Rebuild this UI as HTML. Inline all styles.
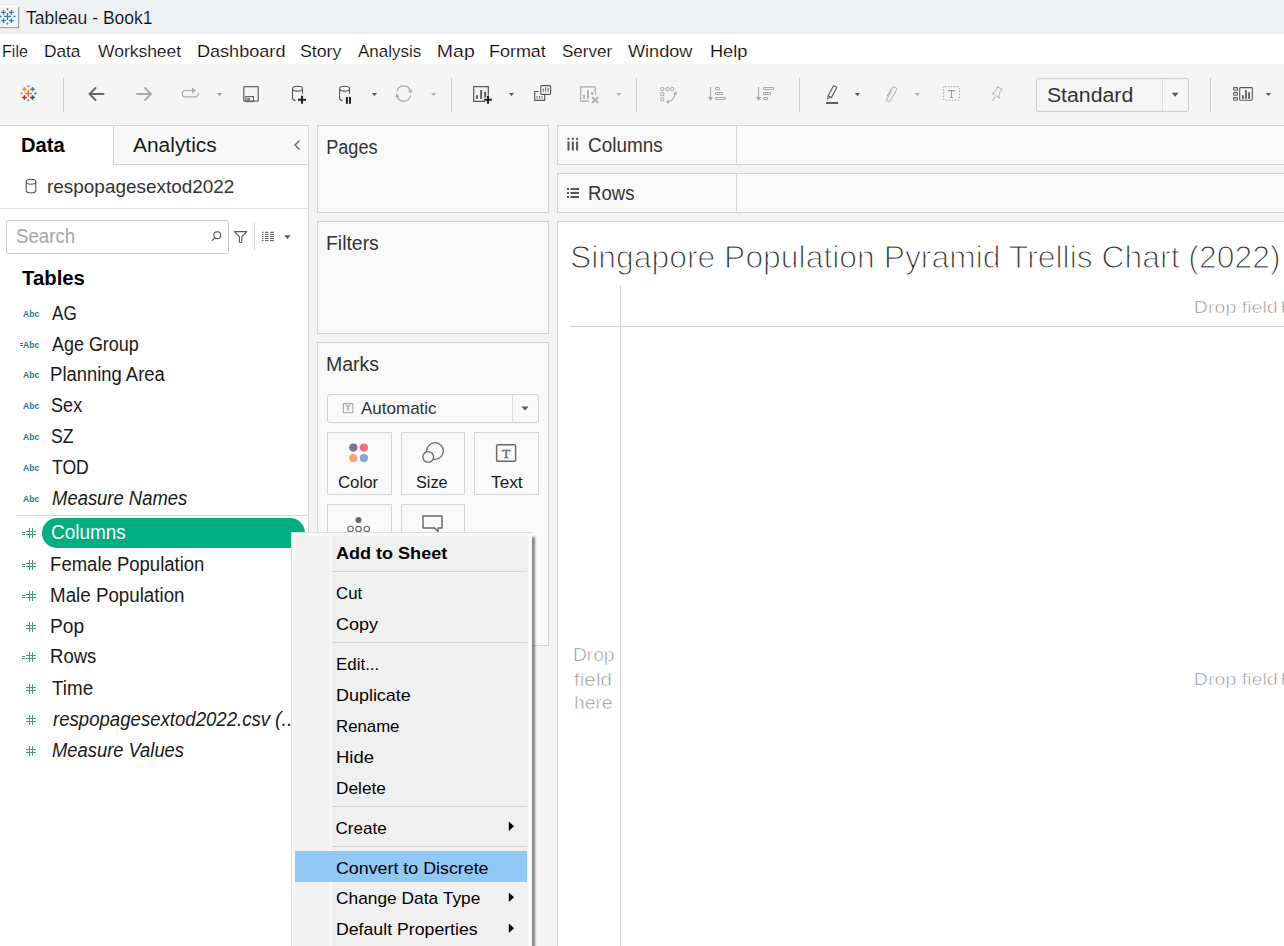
<!DOCTYPE html>
<html><head><meta charset="utf-8"><style>
html,body{margin:0;padding:0;width:1284px;height:946px;overflow:hidden;background:#f4f4f4;font-family:"Liberation Sans",sans-serif;position:relative}
span{font-family:"Liberation Sans",sans-serif}
svg{overflow:visible}
</style></head><body>
<div style="position:absolute;left:0px;top:0px;width:1284px;height:34px;background:#eff0f4"></div><div style="position:absolute;left:-2px;top:6px;width:20px;height:21px;box-sizing:border-box;background:#f2f2f2;border:1px solid #ffffff;box-shadow:1px 1px 1px #a0a0a0"></div><svg style="position:absolute;left:0;top:0" width="20" height="34" viewBox="0 0 20 34">
<g stroke="#2e7dbf" stroke-width="1.3" fill="none">
<path d="M7.5 13v6.9M4.1 16.4h6.9"/>
<path d="M3.5 10.1v4.6M1.2 12.4h4.6"/>
<path d="M11.4 10.1v4.6M9.1 12.4h4.6"/>
<path d="M3.5 18.4v4.6M1.2 20.7h4.6"/>
<path d="M11.4 18.4v4.6M9.1 20.7h4.6"/>
</g>
<g fill="#2e7dbf">
<path d="M7.5 7.9l1.2 1.2-1.2 1.2-1.2-1.2z"/>
<path d="M7.5 22.4l1.2 1.2-1.2 1.2-1.2-1.2z"/>
<path d="M14.5 15.2l1.2 1.2-1.2 1.2-1.2-1.2z"/>
<path d="M0.7 15.2l1.2 1.2-1.2 1.2-1.2-1.2z"/>
</g></svg><span style="position:absolute;left:26.20px;top:9.00px;font-size:18px;line-height:18px;font-weight:400;font-style:normal;color:#000;white-space:pre;transform:scaleX(0.9729);transform-origin:0.00px 0;-webkit-text-stroke:0.2px #eff0f4">Tableau - Book1</span><div style="position:absolute;left:0px;top:34px;width:1284px;height:30px;background:#ffffff"></div><span style="position:absolute;left:2.00px;top:43.00px;font-size:17px;line-height:17px;font-weight:400;font-style:normal;color:#000;white-space:pre;transform:scaleX(0.9423);transform-origin:1.00px 0;-webkit-text-stroke:0.2px #ffffff">File</span><span style="position:absolute;left:43.50px;top:43.00px;font-size:17px;line-height:17px;font-weight:400;font-style:normal;color:#000;white-space:pre;transform:scaleX(1.0143);transform-origin:1.00px 0;-webkit-text-stroke:0.2px #ffffff">Data</span><span style="position:absolute;left:97.50px;top:43.00px;font-size:17px;line-height:17px;font-weight:400;font-style:normal;color:#000;white-space:pre;transform:scaleX(1.0272);transform-origin:0.00px 0;-webkit-text-stroke:0.2px #ffffff">Worksheet</span><span style="position:absolute;left:196.80px;top:43.00px;font-size:17px;line-height:17px;font-weight:400;font-style:normal;color:#000;white-space:pre;transform:scaleX(1.0642);transform-origin:1.00px 0;-webkit-text-stroke:0.2px #ffffff">Dashboard</span><span style="position:absolute;left:300.00px;top:43.00px;font-size:17px;line-height:17px;font-weight:400;font-style:normal;color:#000;white-space:pre;transform:scaleX(1.0436);transform-origin:1.00px 0;-webkit-text-stroke:0.2px #ffffff">Story</span><span style="position:absolute;left:358.00px;top:43.00px;font-size:17px;line-height:17px;font-weight:400;font-style:normal;color:#000;white-space:pre;-webkit-text-stroke:0.2px #ffffff">Analysis</span><span style="position:absolute;left:437.00px;top:43.00px;font-size:17px;line-height:17px;font-weight:400;font-style:normal;color:#000;white-space:pre;transform:scaleX(1.1452);transform-origin:1.00px 0;-webkit-text-stroke:0.2px #ffffff">Map</span><span style="position:absolute;left:489.00px;top:43.00px;font-size:17px;line-height:17px;font-weight:400;font-style:normal;color:#000;white-space:pre;transform:scaleX(1.0566);transform-origin:1.00px 0;-webkit-text-stroke:0.2px #ffffff">Format</span><span style="position:absolute;left:562.00px;top:43.00px;font-size:17px;line-height:17px;font-weight:400;font-style:normal;color:#000;white-space:pre;-webkit-text-stroke:0.2px #ffffff">Server</span><span style="position:absolute;left:628.00px;top:43.00px;font-size:17px;line-height:17px;font-weight:400;font-style:normal;color:#000;white-space:pre;transform:scaleX(1.0656);transform-origin:0.00px 0;-webkit-text-stroke:0.2px #ffffff">Window</span><span style="position:absolute;left:709.60px;top:43.00px;font-size:17px;line-height:17px;font-weight:400;font-style:normal;color:#000;white-space:pre;transform:scaleX(1.0727);transform-origin:1.00px 0;-webkit-text-stroke:0.2px #ffffff">Help</span><div style="position:absolute;left:0px;top:64px;width:1284px;height:61px;background:#f5f5f5"></div><div style="position:absolute;left:63px;top:78px;width:1px;height:34px;background:#cfcfcf"></div><div style="position:absolute;left:451px;top:78px;width:1px;height:34px;background:#cfcfcf"></div><div style="position:absolute;left:636px;top:78px;width:1px;height:34px;background:#cfcfcf"></div><div style="position:absolute;left:799px;top:78px;width:1px;height:34px;background:#cfcfcf"></div><div style="position:absolute;left:1210px;top:78px;width:1px;height:34px;background:#cfcfcf"></div><div style="position:absolute;left:308px;top:125px;width:9px;height:821px;background:#f4f4f4"></div><div style="position:absolute;left:0px;top:125px;width:309px;height:821px;background:#ffffff;border-top:1px solid #d6d6d6;border-right:1px solid #d6d6d6;box-sizing:border-box"></div><div style="position:absolute;left:113px;top:125px;width:195px;height:40px;background:#f8f8f8;border-top:1px solid #d6d6d6;border-left:1px solid #d4d4d4;border-bottom:1px solid #d4d4d4;box-sizing:border-box"></div><span style="position:absolute;left:21.00px;top:135.00px;font-size:20px;line-height:20px;font-weight:700;font-style:normal;color:#000;white-space:pre;transform:scaleX(1.0070);transform-origin:1.00px 0;">Data</span><span style="position:absolute;left:132.80px;top:135.00px;font-size:20px;line-height:20px;font-weight:400;font-style:normal;color:#1a1a1a;white-space:pre;transform:scaleX(1.0468);transform-origin:0.00px 0;">Analytics</span><svg style="position:absolute;left:291.8px;top:137.8px" width="10" height="14"><path d="M7.5 2.5L3 7l4.5 4.5" stroke="#5a5a5a" stroke-width="1.2" fill="none"/></svg><svg style="position:absolute;left:25px;top:178px" width="12" height="16"><ellipse cx="6" cy="3.8" rx="4.8" ry="2.5" stroke="#555" stroke-width="1.1" fill="none"/><path d="M1.2 3.8v8.7c0 1.3 2.2 2.3 4.8 2.3s4.8-1 4.8-2.3V3.8" stroke="#555" stroke-width="1.1" fill="none"/></svg><span style="position:absolute;left:47.00px;top:177.00px;font-size:19px;line-height:19px;font-weight:400;font-style:normal;color:#333333;white-space:pre;transform:scaleX(0.9962);transform-origin:1.00px 0;">respopagesextod2022</span><div style="position:absolute;left:0px;top:208px;width:308px;height:1px;background:#e2e2e2"></div><div style="position:absolute;left:6px;top:220px;width:223px;height:34px;box-sizing:border-box;border:1px solid #cacaca;border-radius:3px;background:#fff"></div><span style="position:absolute;left:15.70px;top:227.00px;font-size:19.5px;line-height:19.5px;font-weight:400;font-style:normal;color:#a6a6a6;white-space:pre;transform:scaleX(0.9550);transform-origin:1.00px 0;">Search</span><svg style="position:absolute;left:0;top:0" width="300" height="260" viewBox="0 0 300 260">
<circle cx="217.3" cy="235.2" r="3.4" stroke="#555" stroke-width="1.1" fill="none"/>
<path d="M214.9 237.7l-2.6 2.7" stroke="#555" stroke-width="1.2" stroke-linecap="round"/>
<path d="M234.6 231.6h12l-4.8 5.3v5.2c0 0.5 -2.4 0.5 -2.4 0v-5.2z" stroke="#555" stroke-width="1.1" fill="none" stroke-linejoin="round"/>
<g fill="#555">
<rect x="261.9" y="231.8" width="1.6" height="1"/><rect x="265" y="231.8" width="3.5" height="1"/><rect x="270" y="231.8" width="4" height="1"/>
<rect x="261.9" y="233.9" width="1.6" height="1"/><rect x="265" y="233.9" width="3.5" height="1"/><rect x="270" y="233.9" width="4" height="1"/>
<rect x="261.9" y="236" width="1.6" height="1"/><rect x="265" y="236" width="3.5" height="1"/><rect x="270" y="236" width="4" height="1"/>
<rect x="261.9" y="238" width="1.6" height="1"/><rect x="265" y="238" width="3.5" height="1"/><rect x="270" y="238" width="4" height="1"/>
<rect x="261.9" y="240.1" width="1.6" height="1"/><rect x="265" y="240.1" width="3.5" height="1"/><rect x="270" y="240.1" width="4" height="1"/>
</g>
<path d="M284.2 235.3h6.4l-3.2 3.8z" fill="#555"/>
</svg><div style="position:absolute;left:254px;top:223px;width:1px;height:27px;background:#d6d6d6"></div><span style="position:absolute;left:22.00px;top:268.00px;font-size:20px;line-height:20px;font-weight:700;font-style:normal;color:#000;white-space:pre;transform:scaleX(1.0164);transform-origin:0.00px 0;">Tables</span><span style="position:absolute;left:51.60px;top:304.00px;font-size:19.5px;line-height:19.5px;font-weight:400;font-style:normal;color:#1a1a1a;white-space:pre;transform:scaleX(0.8778);transform-origin:0.00px 0;">AG</span><span style="position:absolute;left:23.00px;top:309.00px;font-size:9.5px;line-height:9.5px;font-weight:700;font-style:normal;color:#2a7396;white-space:pre;transform:scaleX(0.9000);transform-origin:0.00px 0;">Abc</span><span style="position:absolute;left:51.60px;top:335.00px;font-size:19.5px;line-height:19.5px;font-weight:400;font-style:normal;color:#1a1a1a;white-space:pre;transform:scaleX(0.9202);transform-origin:0.00px 0;">Age Group</span><span style="position:absolute;left:23.00px;top:340.00px;font-size:9.5px;line-height:9.5px;font-weight:700;font-style:normal;color:#2a7396;white-space:pre;transform:scaleX(0.9000);transform-origin:0.00px 0;">Abc</span><div style="position:absolute;left:20px;top:343px;width:3px;height:1px;background:#2a7396"></div><div style="position:absolute;left:20px;top:345px;width:3px;height:1px;background:#2a7396"></div><span style="position:absolute;left:49.60px;top:365.00px;font-size:19.5px;line-height:19.5px;font-weight:400;font-style:normal;color:#1a1a1a;white-space:pre;transform:scaleX(0.9442);transform-origin:2.00px 0;">Planning Area</span><span style="position:absolute;left:23.00px;top:370.00px;font-size:9.5px;line-height:9.5px;font-weight:700;font-style:normal;color:#2a7396;white-space:pre;transform:scaleX(0.9000);transform-origin:0.00px 0;">Abc</span><span style="position:absolute;left:50.60px;top:396.00px;font-size:19.5px;line-height:19.5px;font-weight:400;font-style:normal;color:#1a1a1a;white-space:pre;transform:scaleX(0.9250);transform-origin:1.00px 0;">Sex</span><span style="position:absolute;left:23.00px;top:401.00px;font-size:9.5px;line-height:9.5px;font-weight:700;font-style:normal;color:#2a7396;white-space:pre;transform:scaleX(0.9000);transform-origin:0.00px 0;">Abc</span><span style="position:absolute;left:50.60px;top:427.00px;font-size:19.5px;line-height:19.5px;font-weight:400;font-style:normal;color:#1a1a1a;white-space:pre;transform:scaleX(0.9042);transform-origin:1.00px 0;">SZ</span><span style="position:absolute;left:23.00px;top:432.00px;font-size:9.5px;line-height:9.5px;font-weight:700;font-style:normal;color:#2a7396;white-space:pre;transform:scaleX(0.9000);transform-origin:0.00px 0;">Abc</span><span style="position:absolute;left:51.60px;top:458.00px;font-size:19.5px;line-height:19.5px;font-weight:400;font-style:normal;color:#1a1a1a;white-space:pre;transform:scaleX(0.9025);transform-origin:0.00px 0;">TOD</span><span style="position:absolute;left:23.00px;top:463.00px;font-size:9.5px;line-height:9.5px;font-weight:700;font-style:normal;color:#2a7396;white-space:pre;transform:scaleX(0.9000);transform-origin:0.00px 0;">Abc</span><span style="position:absolute;left:51.80px;top:489.00px;font-size:19.5px;line-height:19.5px;font-weight:400;font-style:italic;color:#1a1a1a;white-space:pre;transform:scaleX(0.9447);transform-origin:1.00px 0;">Measure Names</span><span style="position:absolute;left:23.00px;top:494.00px;font-size:9.5px;line-height:9.5px;font-weight:700;font-style:normal;color:#2a7396;white-space:pre;transform:scaleX(0.9000);transform-origin:0.00px 0;">Abc</span><div style="position:absolute;left:16px;top:515px;width:292px;height:1px;background:#d9d9d9"></div><div style="position:absolute;left:42px;top:518px;width:263px;height:30px;border-radius:15px;background:#00ae82"></div><span style="position:absolute;left:50.70px;top:523.00px;font-size:19.5px;line-height:19.5px;font-weight:400;font-style:normal;color:#ffffff;white-space:pre;transform:scaleX(0.9707);transform-origin:1.00px 0;">Columns</span><div style="position:absolute;left:22px;top:532px;width:3px;height:1px;background:#40a07a"></div><div style="position:absolute;left:22px;top:534px;width:3px;height:1px;background:#40a07a"></div><div style="position:absolute;left:29px;top:528px;width:1px;height:10px;background:#40a07a"></div><div style="position:absolute;left:32px;top:528px;width:1px;height:10px;background:#40a07a"></div><div style="position:absolute;left:26px;top:531px;width:10px;height:1px;background:#40a07a"></div><div style="position:absolute;left:26px;top:534px;width:10px;height:1px;background:#40a07a"></div><span style="position:absolute;left:49.70px;top:555.00px;font-size:19.5px;line-height:19.5px;font-weight:400;font-style:normal;color:#1a1a1a;white-space:pre;transform:scaleX(0.9488);transform-origin:2.00px 0;">Female Population</span><div style="position:absolute;left:22px;top:564px;width:3px;height:1px;background:#40a07a"></div><div style="position:absolute;left:22px;top:566px;width:3px;height:1px;background:#40a07a"></div><div style="position:absolute;left:29px;top:560px;width:1px;height:10px;background:#40a07a"></div><div style="position:absolute;left:32px;top:560px;width:1px;height:10px;background:#40a07a"></div><div style="position:absolute;left:26px;top:563px;width:10px;height:1px;background:#40a07a"></div><div style="position:absolute;left:26px;top:566px;width:10px;height:1px;background:#40a07a"></div><span style="position:absolute;left:49.70px;top:586.00px;font-size:19.5px;line-height:19.5px;font-weight:400;font-style:normal;color:#1a1a1a;white-space:pre;transform:scaleX(0.9613);transform-origin:2.00px 0;">Male Population</span><div style="position:absolute;left:22px;top:595px;width:3px;height:1px;background:#40a07a"></div><div style="position:absolute;left:22px;top:597px;width:3px;height:1px;background:#40a07a"></div><div style="position:absolute;left:29px;top:591px;width:1px;height:10px;background:#40a07a"></div><div style="position:absolute;left:32px;top:591px;width:1px;height:10px;background:#40a07a"></div><div style="position:absolute;left:26px;top:594px;width:10px;height:1px;background:#40a07a"></div><div style="position:absolute;left:26px;top:597px;width:10px;height:1px;background:#40a07a"></div><span style="position:absolute;left:49.70px;top:617.00px;font-size:19.5px;line-height:19.5px;font-weight:400;font-style:normal;color:#1a1a1a;white-space:pre;transform:scaleX(0.9812);transform-origin:2.00px 0;">Pop</span><div style="position:absolute;left:29px;top:622px;width:1px;height:10px;background:#40a07a"></div><div style="position:absolute;left:32px;top:622px;width:1px;height:10px;background:#40a07a"></div><div style="position:absolute;left:26px;top:625px;width:10px;height:1px;background:#40a07a"></div><div style="position:absolute;left:26px;top:628px;width:10px;height:1px;background:#40a07a"></div><span style="position:absolute;left:49.70px;top:647.00px;font-size:19.5px;line-height:19.5px;font-weight:400;font-style:normal;color:#1a1a1a;white-space:pre;transform:scaleX(0.9478);transform-origin:2.00px 0;">Rows</span><div style="position:absolute;left:22px;top:656px;width:3px;height:1px;background:#40a07a"></div><div style="position:absolute;left:22px;top:658px;width:3px;height:1px;background:#40a07a"></div><div style="position:absolute;left:29px;top:652px;width:1px;height:10px;background:#40a07a"></div><div style="position:absolute;left:32px;top:652px;width:1px;height:10px;background:#40a07a"></div><div style="position:absolute;left:26px;top:655px;width:10px;height:1px;background:#40a07a"></div><div style="position:absolute;left:26px;top:658px;width:10px;height:1px;background:#40a07a"></div><span style="position:absolute;left:51.70px;top:679.00px;font-size:19.5px;line-height:19.5px;font-weight:400;font-style:normal;color:#1a1a1a;white-space:pre;transform:scaleX(0.9643);transform-origin:0.00px 0;">Time</span><div style="position:absolute;left:29px;top:684px;width:1px;height:10px;background:#40a07a"></div><div style="position:absolute;left:32px;top:684px;width:1px;height:10px;background:#40a07a"></div><div style="position:absolute;left:26px;top:687px;width:10px;height:1px;background:#40a07a"></div><div style="position:absolute;left:26px;top:690px;width:10px;height:1px;background:#40a07a"></div><span style="position:absolute;left:52.60px;top:710.00px;font-size:19.5px;line-height:19.5px;font-weight:400;font-style:italic;color:#1a1a1a;white-space:pre;transform:scaleX(0.9537);transform-origin:0.00px 0;">respopagesextod2022.csv</span><span style="position:absolute;left:275.00px;top:710.00px;font-size:19.5px;line-height:19.5px;font-weight:400;font-style:italic;color:#1a1a1a;white-space:pre;">(...</span><div style="position:absolute;left:29px;top:715px;width:1px;height:10px;background:#40a07a"></div><div style="position:absolute;left:32px;top:715px;width:1px;height:10px;background:#40a07a"></div><div style="position:absolute;left:26px;top:718px;width:10px;height:1px;background:#40a07a"></div><div style="position:absolute;left:26px;top:721px;width:10px;height:1px;background:#40a07a"></div><span style="position:absolute;left:51.60px;top:741.00px;font-size:19.5px;line-height:19.5px;font-weight:400;font-style:italic;color:#1a1a1a;white-space:pre;transform:scaleX(0.9410);transform-origin:1.00px 0;">Measure Values</span><div style="position:absolute;left:29px;top:746px;width:1px;height:10px;background:#40a07a"></div><div style="position:absolute;left:32px;top:746px;width:1px;height:10px;background:#40a07a"></div><div style="position:absolute;left:26px;top:749px;width:10px;height:1px;background:#40a07a"></div><div style="position:absolute;left:26px;top:752px;width:10px;height:1px;background:#40a07a"></div><div style="position:absolute;left:317px;top:125px;width:232px;height:88px;background:#f9f9f9;border:1px solid #d5d5d5;box-sizing:border-box"></div><span style="position:absolute;left:325.80px;top:138.00px;font-size:19.5px;line-height:19.5px;font-weight:400;font-style:normal;color:#333333;white-space:pre;transform:scaleX(0.9302);transform-origin:2.00px 0;">Pages</span><div style="position:absolute;left:317px;top:221px;width:232px;height:113px;background:#f9f9f9;border:1px solid #d5d5d5;box-sizing:border-box"></div><span style="position:absolute;left:325.80px;top:234.00px;font-size:19.5px;line-height:19.5px;font-weight:400;font-style:normal;color:#333333;white-space:pre;transform:scaleX(0.9940);transform-origin:2.00px 0;">Filters</span><div style="position:absolute;left:317px;top:342px;width:232px;height:304px;background:#f9f9f9;border:1px solid #d5d5d5;box-sizing:border-box"></div><span style="position:absolute;left:326.00px;top:355.00px;font-size:19.5px;line-height:19.5px;font-weight:400;font-style:normal;color:#333333;white-space:pre;">Marks</span><div style="position:absolute;left:327px;top:394px;width:212px;height:29px;box-sizing:border-box;border:1px solid #cfcfcf;border-radius:3px;background:#f9f9f9"></div><div style="position:absolute;left:512px;top:395px;width:1px;height:27px;background:#dcdcdc"></div><svg style="position:absolute;left:521px;top:406px" width="9" height="6"><path d="M0.5 0.5h7l-3.5 4z" fill="#555"/></svg><svg style="position:absolute;left:341px;top:402px" width="14" height="13"><rect x="2.4" y="1.6" width="9.4" height="9.2" rx="0.6" stroke="#a6a6a6" stroke-width="1.1" fill="none"/><path d="M4.4 3.9h5.2" stroke="#a6a6a6" stroke-width="1.1"/><path d="M7 3.9v4.8" stroke="#a6a6a6" stroke-width="1.5"/></svg><span style="position:absolute;left:361.00px;top:400.00px;font-size:17px;line-height:17px;font-weight:400;font-style:normal;color:#333333;white-space:pre;">Automatic</span><div style="position:absolute;left:327px;top:432px;width:65px;height:63px;background:#f9f9f9;border:1px solid #d6d6d6;box-sizing:border-box"></div><div style="position:absolute;left:401px;top:432px;width:64px;height:63px;background:#f9f9f9;border:1px solid #d6d6d6;box-sizing:border-box"></div><div style="position:absolute;left:474px;top:432px;width:65px;height:63px;background:#f9f9f9;border:1px solid #d6d6d6;box-sizing:border-box"></div><div style="position:absolute;left:327px;top:504px;width:65px;height:63px;background:#f9f9f9;border:1px solid #d6d6d6;box-sizing:border-box"></div><div style="position:absolute;left:401px;top:504px;width:64px;height:63px;background:#f9f9f9;border:1px solid #d6d6d6;box-sizing:border-box"></div><svg style="position:absolute;left:345px;top:439px" width="28" height="28"><circle cx="8.3" cy="8.6" r="4.1" fill="#836f9a"/><circle cx="18.9" cy="8.6" r="4.1" fill="#f06f80"/><circle cx="8.3" cy="19.1" r="4.1" fill="#eea57c"/><circle cx="18.9" cy="19.1" r="4.1" fill="#82a6cc"/></svg><span style="position:absolute;left:338.30px;top:475.00px;font-size:16px;line-height:16px;font-weight:400;font-style:normal;color:#1a1a1a;white-space:pre;transform:scaleX(1.0514);transform-origin:1.00px 0;">Color</span><svg style="position:absolute;left:418px;top:438px" width="30" height="28"><circle cx="17" cy="13" r="8.3" stroke="#666" stroke-width="1.3" fill="none"/><circle cx="10.2" cy="19" r="5.4" stroke="#666" stroke-width="1.3" fill="#f9f9f9"/></svg><span style="position:absolute;left:416.00px;top:475.00px;font-size:16px;line-height:16px;font-weight:400;font-style:normal;color:#1a1a1a;white-space:pre;transform:scaleX(1.0167);transform-origin:1.00px 0;">Size</span><svg style="position:absolute;left:494px;top:442px" width="24" height="22"><rect x="2.6" y="2.7" width="19" height="16.6" rx="1.2" stroke="#666" stroke-width="1.4" fill="none"/><text x="12" y="15.7" text-anchor="middle" font-family="Liberation Serif" font-size="13.5" font-weight="400" fill="#666" stroke="#666" stroke-width="0.3">T</text></svg><span style="position:absolute;left:490.70px;top:475.00px;font-size:16px;line-height:16px;font-weight:400;font-style:normal;color:#1a1a1a;white-space:pre;transform:scaleX(1.0793);transform-origin:0.00px 0;">Text</span><svg style="position:absolute;left:344px;top:513px" width="30" height="22"><circle cx="14.5" cy="7" r="3" fill="#666"/><circle cx="6.5" cy="16" r="2.7" stroke="#666" stroke-width="1.1" fill="none"/><circle cx="14.5" cy="16" r="2.7" stroke="#666" stroke-width="1.1" fill="none"/><circle cx="22.8" cy="16" r="2.7" stroke="#666" stroke-width="1.1" fill="none"/></svg><svg style="position:absolute;left:420px;top:513px" width="26" height="22"><path d="M3 3h19v12h-4v3.5l-3.5-3.5H3z" stroke="#666" stroke-width="1.4" fill="none" stroke-linejoin="round"/></svg><div style="position:absolute;left:549px;top:125px;width:8px;height:821px;background:#f4f4f4"></div><div style="position:absolute;left:557px;top:125px;width:740px;height:40px;background:#f9f9f9;border:1px solid #d5d5d5;box-sizing:border-box"></div><div style="position:absolute;left:736px;top:126px;width:1px;height:38px;background:#d8d8d8"></div><div style="position:absolute;left:557px;top:173px;width:740px;height:40px;background:#f9f9f9;border:1px solid #d5d5d5;box-sizing:border-box"></div><div style="position:absolute;left:736px;top:174px;width:1px;height:38px;background:#d8d8d8"></div><svg style="position:absolute;left:566px;top:137px" width="14" height="15"><g fill="#555"><rect x="1.5" y="0.8" width="2" height="2"/><rect x="5.8" y="0.8" width="2" height="2"/><rect x="10.1" y="0.8" width="2" height="2"/><rect x="1.5" y="4.5" width="2" height="9"/><rect x="5.8" y="4.5" width="2" height="9"/><rect x="10.1" y="4.5" width="2" height="9"/></g></svg><span style="position:absolute;left:588.30px;top:136.00px;font-size:19.5px;line-height:19.5px;font-weight:400;font-style:normal;color:#333333;white-space:pre;transform:scaleX(0.9693);transform-origin:1.00px 0;">Columns</span><svg style="position:absolute;left:566px;top:186.5px" width="14" height="13"><g fill="#555"><rect x="1" y="1" width="2" height="2"/><rect x="1" y="5" width="2" height="2"/><rect x="1" y="9" width="2" height="2"/><rect x="4.5" y="1" width="8.5" height="2"/><rect x="4.5" y="5" width="8.5" height="2"/><rect x="4.5" y="9" width="8.5" height="2"/></g></svg><span style="position:absolute;left:587.70px;top:184.00px;font-size:19.5px;line-height:19.5px;font-weight:400;font-style:normal;color:#333333;white-space:pre;transform:scaleX(0.9500);transform-origin:2.00px 0;">Rows</span><div style="position:absolute;left:557px;top:221px;width:740px;height:730px;background:#ffffff;border:1px solid #d5d5d5;box-sizing:border-box"></div><span style="position:absolute;left:569.70px;top:242.00px;font-size:30.5px;line-height:30.5px;font-weight:400;font-style:normal;color:#333333;white-space:pre;transform:scaleX(1.0453);transform-origin:2.00px 0;-webkit-text-stroke:1.1px #ffffff;paint-order:fill">Singapore Population Pyramid Trellis Chart (2022)</span><div style="position:absolute;left:620px;top:286px;width:1px;height:660px;background:#d0d0d0"></div><div style="position:absolute;left:570px;top:326px;width:714px;height:1px;background:#d0d0d0"></div><span style="position:absolute;left:1193.70px;top:299.00px;font-size:17px;line-height:17px;font-weight:400;font-style:normal;color:#8a8a8a;white-space:pre;transform:scaleX(1.1521);transform-origin:1.00px 0;-webkit-text-stroke:0.6px #ffffff">Drop field</span><span style="position:absolute;left:1280.80px;top:299.00px;font-size:17px;line-height:17px;font-weight:400;font-style:normal;color:#8a8a8a;white-space:pre;transform:scaleX(1.1938);transform-origin:1.00px 0;-webkit-text-stroke:0.6px #ffffff">here</span><span style="position:absolute;left:1193.70px;top:671.00px;font-size:17px;line-height:17px;font-weight:400;font-style:normal;color:#8a8a8a;white-space:pre;transform:scaleX(1.1521);transform-origin:1.00px 0;-webkit-text-stroke:0.6px #ffffff">Drop field</span><span style="position:absolute;left:1280.80px;top:671.00px;font-size:17px;line-height:17px;font-weight:400;font-style:normal;color:#8a8a8a;white-space:pre;transform:scaleX(1.1938);transform-origin:1.00px 0;-webkit-text-stroke:0.6px #ffffff">here</span><span style="position:absolute;left:572.50px;top:647.00px;font-size:17.5px;line-height:17.5px;font-weight:400;font-style:normal;color:#8a8a8a;white-space:pre;transform:scaleX(1.0972);transform-origin:1.00px 0;-webkit-text-stroke:0.6px #ffffff">Drop</span><span style="position:absolute;left:574.30px;top:672.00px;font-size:17.5px;line-height:17.5px;font-weight:400;font-style:normal;color:#8a8a8a;white-space:pre;transform:scaleX(1.1839);transform-origin:0.00px 0;-webkit-text-stroke:0.6px #ffffff">field</span><span style="position:absolute;left:573.80px;top:695.00px;font-size:17.5px;line-height:17.5px;font-weight:400;font-style:normal;color:#8a8a8a;white-space:pre;transform:scaleX(1.1061);transform-origin:1.00px 0;-webkit-text-stroke:0.6px #ffffff">here</span><div style="position:absolute;left:291px;top:532px;width:241px;height:420px;background:#f9f9f9;border-top:1px solid #dddddd;border-left:1px solid #dddddd;box-sizing:border-box;box-shadow:3px 5px 2px rgba(0,0,0,0.45)"></div><div style="position:absolute;left:295px;top:536px;width:233px;height:410px;background:#f0f0f0"></div><div style="position:absolute;left:329px;top:536px;width:3px;height:410px;background:#f7f7f7"></div><div style="position:absolute;left:332px;top:571px;width:195px;height:1px;background:#d5d5d5"></div><div style="position:absolute;left:332px;top:642px;width:195px;height:1px;background:#d5d5d5"></div><div style="position:absolute;left:332px;top:806px;width:195px;height:1px;background:#d5d5d5"></div><div style="position:absolute;left:332px;top:846px;width:195px;height:1px;background:#d5d5d5"></div><div style="position:absolute;left:295px;top:851px;width:232px;height:31px;background:#91c8f6"></div><span style="position:absolute;left:335.60px;top:545.00px;font-size:17px;line-height:17px;font-weight:700;font-style:normal;color:#000;white-space:pre;transform:scaleX(1.0615);transform-origin:1.00px 0;">Add to Sheet</span><span style="position:absolute;left:335.60px;top:585.00px;font-size:17px;line-height:17px;font-weight:400;font-style:normal;color:#000;white-space:pre;transform:scaleX(0.9885);transform-origin:1.00px 0;">Cut</span><span style="position:absolute;left:335.60px;top:616.00px;font-size:17px;line-height:17px;font-weight:400;font-style:normal;color:#000;white-space:pre;transform:scaleX(1.0590);transform-origin:1.00px 0;">Copy</span><span style="position:absolute;left:335.60px;top:656.00px;font-size:17px;line-height:17px;font-weight:400;font-style:normal;color:#000;white-space:pre;transform:scaleX(0.9951);transform-origin:1.00px 0;">Edit...</span><span style="position:absolute;left:335.60px;top:687.00px;font-size:17px;line-height:17px;font-weight:400;font-style:normal;color:#000;white-space:pre;transform:scaleX(1.0565);transform-origin:1.00px 0;">Duplicate</span><span style="position:absolute;left:335.60px;top:718.00px;font-size:17px;line-height:17px;font-weight:400;font-style:normal;color:#000;white-space:pre;transform:scaleX(0.9873);transform-origin:1.00px 0;">Rename</span><span style="position:absolute;left:335.60px;top:749.00px;font-size:17px;line-height:17px;font-weight:400;font-style:normal;color:#000;white-space:pre;transform:scaleX(1.0879);transform-origin:1.00px 0;">Hide</span><span style="position:absolute;left:335.60px;top:780.00px;font-size:17px;line-height:17px;font-weight:400;font-style:normal;color:#000;white-space:pre;transform:scaleX(1.0167);transform-origin:1.00px 0;">Delete</span><span style="position:absolute;left:335.60px;top:820.00px;font-size:17px;line-height:17px;font-weight:400;font-style:normal;color:#000;white-space:pre;">Create</span><span style="position:absolute;left:335.60px;top:860.00px;font-size:17px;line-height:17px;font-weight:400;font-style:normal;color:#000;white-space:pre;transform:scaleX(1.0486);transform-origin:1.00px 0;">Convert to Discrete</span><span style="position:absolute;left:335.60px;top:890.00px;font-size:17px;line-height:17px;font-weight:400;font-style:normal;color:#000;white-space:pre;transform:scaleX(1.0207);transform-origin:1.00px 0;">Change Data Type</span><span style="position:absolute;left:335.60px;top:921.00px;font-size:17px;line-height:17px;font-weight:400;font-style:normal;color:#000;white-space:pre;transform:scaleX(1.0415);transform-origin:1.00px 0;">Default Properties</span><svg style="position:absolute;left:508px;top:820.6px" width="7" height="11"><path d="M0.8 0.5L6 5.2 0.8 10z" fill="#000"/></svg><svg style="position:absolute;left:508px;top:892px" width="7" height="11"><path d="M0.8 0.5L6 5.2 0.8 10z" fill="#000"/></svg><svg style="position:absolute;left:508px;top:922.6px" width="7" height="11"><path d="M0.8 0.5L6 5.2 0.8 10z" fill="#000"/></svg><svg style="position:absolute;left:0;top:64px" width="1284" height="61" viewBox="0 64 1284 61">
<!-- tableau logo -->
<g stroke-width="1.5" fill="none">
<path d="M28.4 90v7M24.9 93.5h7" stroke="#e8762c"/>
<path d="M24.4 87v4.6M22.1 89.3h4.6" stroke="#f28e2b"/>
<path d="M32.5 87v4.6M30.2 89.3h4.6" stroke="#4e7e94"/>
<path d="M24.4 95.2v4.6M22.1 97.5h4.6" stroke="#c72035"/>
<path d="M32.5 95.2v4.6M30.2 97.5h4.6" stroke="#1f447e"/>
</g>
<g>
<path d="M28.4 84.8l1.4 1.4-1.4 1.4-1.4-1.4z" fill="#6c9fb1"/>
<path d="M21.5 92l1.4 1.4-1.4 1.4-1.4-1.4z" fill="#7aa7b8"/>
<path d="M35.4 92l1.4 1.4-1.4 1.4-1.4-1.4z" fill="#59639c"/>
<path d="M28.4 99l1.4 1.4-1.4 1.4-1.4-1.4z" fill="#8e9ac0"/>
</g>
<!-- back arrow -->
<path d="M103.5 94H89.5M95.5 88l-6 6 6 6" stroke="#666" stroke-width="1.9" fill="none" stroke-linecap="round" stroke-linejoin="round"/>
<!-- forward arrow -->
<path d="M137 94h14M145 88l6 6-6 6" stroke="#aaa" stroke-width="1.9" fill="none" stroke-linecap="round" stroke-linejoin="round"/>
<!-- loop -->
<path d="M192 90.5h-6.5a3.2 3.2 0 0 0 0 6.4h9.5a3.2 3.2 0 0 0 3-4.5" stroke="#aaa" stroke-width="1.2" fill="none"/>
<path d="M192 87.5l4 3-4 3z" fill="#aaa"/>
<path d="M217 93h5l-2.5 3z" fill="#999"/>
<!-- save -->
<rect x="243.8" y="86.6" width="14.4" height="14.6" rx="0.8" stroke="#666" stroke-width="1.3" fill="none"/>
<rect x="245.8" y="96.6" width="7.6" height="5" stroke="#666" stroke-width="1.2" fill="none"/>
<rect x="247.2" y="98" width="2.8" height="3.2" fill="#777"/>
<!-- datasource + -->
<ellipse cx="297.5" cy="88.7" rx="5" ry="2.4" stroke="#555" stroke-width="1.1" fill="none"/>
<path d="M292.5 88.7v9.6c0 1.2 1.3 2 3 2.3M302.5 88.7v5" stroke="#555" stroke-width="1.1" fill="none"/>
<path d="M302 95.8v8M298 99.8h8" stroke="#222" stroke-width="2.1"/>
<!-- datasource pause -->
<ellipse cx="344.6" cy="88.7" rx="5" ry="2.4" stroke="#555" stroke-width="1.1" fill="none"/>
<path d="M339.6 88.7v9.6c0 1.2 1.3 2 3 2.3M349.6 88.7v5" stroke="#555" stroke-width="1.1" fill="none"/>
<rect x="345.9" y="97" width="2" height="6.8" fill="#222"/><rect x="349" y="97" width="2" height="6.8" fill="#222"/>
<path d="M371.8 93h5.3l-2.65 3z" fill="#555"/>
<!-- refresh -->
<path d="M397 91.5a6.8 6.8 0 0 1 13.3 -0.5" stroke="#aaa" stroke-width="1.2" fill="none"/>
<path d="M410.5 95.5a6.8 6.8 0 0 1 -13.3 0.5" stroke="#aaa" stroke-width="1.2" fill="none"/>
<path d="M412.3 89.2l-1 4.2-3.2-2.6z" fill="#aaa"/>
<path d="M395.2 97.8l1-4.2 3.2 2.6z" fill="#aaa"/>
<path d="M431 93h5.3l-2.65 3z" fill="#aaa"/>
<!-- new worksheet -->
<path d="M485 101.3h-11.3v-14.6h14.6v9" stroke="#555" stroke-width="1.2" fill="none"/>
<rect x="476.1" y="95.2" width="1.9" height="3.7" fill="#555"/><rect x="480.2" y="90" width="1.9" height="8.9" fill="#555"/><rect x="484.2" y="91.8" width="1.9" height="5.5" fill="#555"/>
<path d="M488 95.9v7.8M484.1 99.8h7.8" stroke="#222" stroke-width="2.1"/>
<path d="M509 93h5l-2.5 3z" fill="#555"/>
<!-- duplicate sheet -->
<rect x="540.8" y="85.6" width="9.8" height="8.8" rx="0.8" stroke="#555" stroke-width="1.1" fill="none"/>
<path d="M544.6 85.8v0" />
<rect x="542.8" y="88.5" width="0.9" height="3.2" fill="#555"/><rect x="545.2" y="87.3" width="0.9" height="4.4" fill="#555"/><rect x="547.6" y="88.1" width="0.9" height="3.6" fill="#555"/>
<path d="M538.5 91.5h-3.8v8.9h10v-5.8" stroke="#555" stroke-width="1.1" fill="none"/>
<rect x="536.6" y="96" width="0.9" height="2.6" fill="#555"/><rect x="539" y="96" width="0.9" height="2.6" fill="#555"/><rect x="541.4" y="96" width="0.9" height="2.6" fill="#555"/>
<!-- clear sheet -->
<path d="M589 101.2h-8.3v-14.4h14.5v8" stroke="#aaa" stroke-width="1.2" fill="none"/>
<rect x="583.2" y="95" width="1.8" height="3.8" fill="#aaa"/><rect x="587" y="90.1" width="1.8" height="8.7" fill="#aaa"/><rect x="591.2" y="92" width="1.8" height="3" fill="#aaa"/>
<path d="M592 97.2l6.2 5.6M598.2 97.2l-6.2 5.6" stroke="#aaa" stroke-width="1.8"/>
<path d="M616.3 93h5l-2.5 3z" fill="#aaa"/>
<!-- swap -->
<g stroke="#aaa" stroke-width="1" fill="none">
<rect x="660.8" y="87.6" width="3" height="3" rx="0.4"/><rect x="665.9" y="87.6" width="3" height="3" rx="0.4"/><rect x="670.8" y="87.6" width="3" height="3" rx="0.4"/>
<rect x="660.8" y="92.6" width="3" height="3" rx="0.4"/><rect x="660.8" y="97.8" width="3" height="3" rx="0.4"/>
<path d="M667 102a9 9 0 0 0 8 -8" stroke-width="1.1"/>
</g>
<path d="M673 94.2l3-3.2 1.2 4z" fill="#aaa"/><path d="M668.5 99.8l-3 2.4 3.6 1.6z" fill="#aaa"/>
<!-- sort asc -->
<path d="M710.5 87v11" stroke="#aaa" stroke-width="1"/><path d="M707.8 97l2.7 3.9 2.7-3.9z" fill="#aaa"/>
<g stroke="#aaa" stroke-width="1" fill="none">
<rect x="715.5" y="87.5" width="4" height="2" rx="0.3"/><rect x="715.5" y="92.5" width="7" height="2" rx="0.3"/><rect x="715.5" y="97.5" width="10" height="2" rx="0.3"/>
</g>
<!-- sort desc -->
<path d="M758.5 87v11" stroke="#aaa" stroke-width="1"/><path d="M755.8 97l2.7 3.9 2.7-3.9z" fill="#aaa"/>
<g stroke="#aaa" stroke-width="1" fill="none">
<rect x="763.5" y="87.5" width="10" height="2" rx="0.3"/><rect x="763.5" y="92.5" width="7" height="2" rx="0.3"/><rect x="763.5" y="97.5" width="4" height="2" rx="0.3"/>
</g>
<!-- highlighter -->
<path d="M831.5 97.5l5-9.5a1 1 0 0 0 -0.5 -1.3l-1.6 -0.8a1 1 0 0 0 -1.3 0.5l-5 9.5z" stroke="#555" stroke-width="1.1" fill="none"/>
<path d="M828.2 96.2l-0.8 3.2M830 97.2l-1.6 1.4" stroke="#555" stroke-width="1"/>
<rect x="826" y="102" width="12.1" height="1.9" fill="#555"/>
<path d="M854.8 93h5.2l-2.6 3z" fill="#555"/>
<!-- paperclip -->
<path d="M887 96.5l5-8.5a2.5 2.5 0 0 1 4.3 2.5l-6 10.2a1.9 1.9 0 0 1 -3.3 -1.9l5 -8.5" stroke="#aaa" stroke-width="1" fill="none"/>
<path d="M914.8 93h5.2l-2.6 3z" fill="#aaa"/>
<!-- text box -->
<rect x="943.6" y="86.6" width="15.8" height="13.6" rx="1.2" stroke="#aaa" stroke-width="1" stroke-dasharray="1.6 1.4" fill="none"/>
<path d="M948.3 91.4v-0.9h6.4v0.9M951.5 90.5v7M950 97.5h3" stroke="#999" stroke-width="1" fill="none"/>
<!-- pin -->
<path d="M997 86.5l5.6 3-2.4 1.7-1.4 4.6 0.6 2.2-2.6-1.6-2.3-2.2-2.4-0.6 3.6-2.6 1.8-3.6z" stroke="#aaa" stroke-width="0.9" fill="none" stroke-linejoin="round"/>
<path d="M995 96.5l-2.3 4.3" stroke="#aaa" stroke-width="1"/>
<!-- show me -->
<g stroke="#5a5a5a" stroke-width="1.1" fill="none">
<rect x="1233.6" y="87.6" width="3.8" height="2.6" rx="0.6"/><rect x="1233.6" y="92.6" width="3.8" height="2.6" rx="0.6"/><rect x="1233.6" y="97.6" width="3.8" height="2.6" rx="0.6"/>
<rect x="1239.7" y="87.6" width="12.6" height="12.6" rx="0.6"/>
</g>
<rect x="1242" y="95.2" width="1.8" height="3.6" fill="#5a5a5a"/><rect x="1245.1" y="90.1" width="1.8" height="8.7" fill="#5a5a5a"/><rect x="1248.2" y="92.2" width="1.8" height="6.6" fill="#5a5a5a"/>
<path d="M1265.9 93h5.2l-2.6 3z" fill="#555"/>
</svg>
<div style="position:absolute;left:1036px;top:78px;width:153px;height:34px;box-sizing:border-box;border:1px solid #cdcdcd;border-radius:3px;background:#f6f6f6"></div>
<div style="position:absolute;left:1162px;top:79px;width:1px;height:32px;background:#dcdcdc"></div>
<svg style="position:absolute;left:1171px;top:92px" width="9" height="6"><path d="M0.8 0.8h6.8l-3.4 4z" fill="#555"/></svg>
<span style="position:absolute;left:1047.00px;top:85.00px;font-size:20px;line-height:20px;font-weight:400;font-style:normal;color:#333333;white-space:pre;transform:scaleX(1.0633);transform-origin:1.00px 0;">Standard</span>
</body></html>
